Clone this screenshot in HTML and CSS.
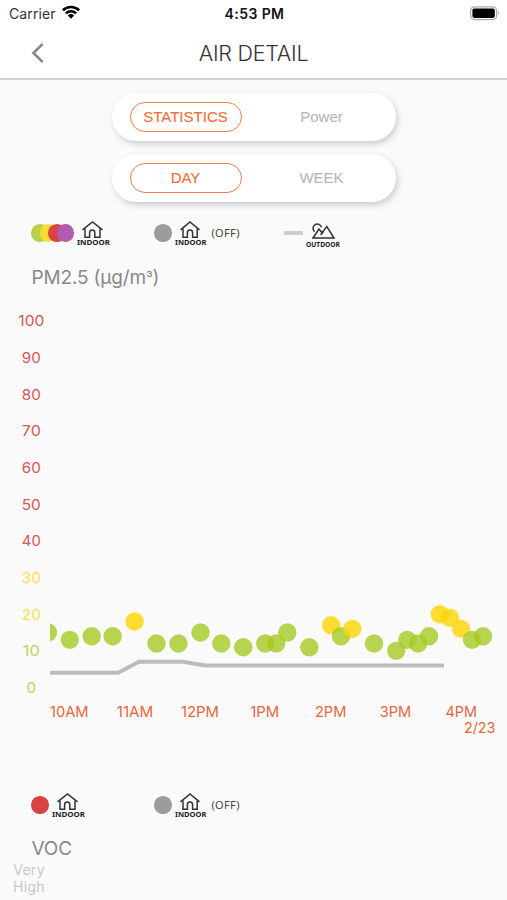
FILE: index.html
```html
<!DOCTYPE html>
<html lang="en">
<head>
<meta charset="UTF-8" />
<meta name="viewport" content="width=device-width, initial-scale=1" />
<title>Air Detail</title>
<link rel="stylesheet" href="styles.css">
</head>
<body>

<header>
  <div class="status-bar">
    <div class="carrier">
      <span>Carrier</span>
      <svg class="wifi" width="20" height="16" viewBox="0 0 20 16">
        <path d="M1.9 5.3 A11.6 11.6 0 0 1 18.1 5.3" />
        <path d="M4.9 8.4 A7.3 7.3 0 0 1 15.1 8.4" />
        <path class="tip" d="M6.9 10.4 A4.4 4.4 0 0 1 13.1 10.4 L10 13.7 Z" />
      </svg>
    </div>
    <div class="time">4:53 PM</div>
    <svg class="battery" width="32" height="16" viewBox="0 0 32 16">
      <rect class="case" x="1.6" y="0.8" width="26" height="12.8" rx="4" />
      <rect x="3.4" y="2.5" width="22.4" height="9.4" rx="1.8" />
      <path class="cap" d="M28.9 5 Q30.8 7.2 28.9 9.4 Z" />
    </svg>
  </div>
  <div class="nav-bar">
    <svg class="back" width="16" height="24" viewBox="0 0 16 24">
      <path d="M12.6 3 L3.4 12 L12.6 21" />
    </svg>
    <h1>AIR DETAIL</h1>
  </div>
</header>

<main>
  <div class="switch">
    <button class="active">STATISTICS</button>
    <button>Power</button>
  </div>
  <div class="switch">
    <button class="active">DAY</button>
    <button>WEEK</button>
  </div>

  <section class="pm">
    <div class="legend">
      <div class="item">
        <span class="dot green"></span>
        <span class="dot yellow"></span>
        <span class="dot red"></span>
        <span class="dot purple"></span>
        <svg class="icon" width="36" height="26" viewBox="0 0 36 26">
          <path d="M5.5 9.8 L15.5 2 L25.5 9.8" />
          <path d="M8 8.4 V17.2 H12.6 V12.7 A2.6 2.6 0 0 1 17.8 12.7 V17.2 H23 V8.4" />
          <text x="0" y="25" textLength="33" lengthAdjust="spacingAndGlyphs">INDOOR</text>
        </svg>
      </div>
      <div class="item">
        <span class="dot gray"></span>
        <svg class="icon" width="36" height="26" viewBox="0 0 36 26">
          <path d="M5.5 9.8 L15 2 L24.5 9.8" />
          <path d="M8 8.4 V17.2 H12.4 V12.7 A2.6 2.6 0 0 1 17.6 12.7 V17.2 H22.2 V8.4" />
          <text x="0" y="25" textLength="31.5" lengthAdjust="spacingAndGlyphs">INDOOR</text>
        </svg>
        <span class="off">(OFF)</span>
      </div>
      <div class="item">
        <span class="line"></span>
        <svg class="icon" width="36" height="26" viewBox="0 0 36 26">
          <path d="M8.5 11.6 A4.3 4.3 0 1 1 15.5 7.4" />
          <path d="M7 18 L13 9 L16 12.8 L20.8 6.6 L28 18 Z" />
          <path d="M14.6 15 L17.6 11.2" />
          <text x="0" y="27" textLength="34" lengthAdjust="spacingAndGlyphs">OUTDOOR</text>
        </svg>
      </div>
    </div>
    <h2>PM2.5 (μg/m<span class="cubed">³</span>)</h2>
    <svg class="chart" id="pmChart" width="507" height="450" viewBox="0 300 507 450">
      <defs>
        <clipPath id="plot"><rect x="50" y="300" width="457" height="400" /></clipPath>
      </defs>
      <polyline class="outdoor-line" points="50,672.8 118,672.8 139,661.8 183,661.8 205,665.5 444,665.5" />
    </svg>
  </section>

  <section class="voc">
    <div class="legend">
      <div class="item">
        <span class="dot red"></span>
        <svg class="icon" width="36" height="26" viewBox="0 0 36 26">
          <path d="M5.5 9.8 L15.5 2 L25.5 9.8" />
          <path d="M8 8.4 V17.2 H12.6 V12.7 A2.6 2.6 0 0 1 17.8 12.7 V17.2 H23 V8.4" />
          <text x="0" y="25" textLength="33" lengthAdjust="spacingAndGlyphs">INDOOR</text>
        </svg>
      </div>
      <div class="item">
        <span class="dot gray"></span>
        <svg class="icon" width="36" height="26" viewBox="0 0 36 26">
          <path d="M5.5 9.8 L15 2 L24.5 9.8" />
          <path d="M8 8.4 V17.2 H12.4 V12.7 A2.6 2.6 0 0 1 17.6 12.7 V17.2 H22.2 V8.4" />
          <text x="0" y="25" textLength="31.5" lengthAdjust="spacingAndGlyphs">INDOOR</text>
        </svg>
        <span class="off">(OFF)</span>
      </div>
    </div>
    <h2>VOC</h2>
    <div class="level">Very<br>High</div>
  </section>
</main>

<script src="script.js"></script>
</body>
</html>
```
FILE: styles.css
```css
* {
  box-sizing: border-box;
}
body {
  margin: 0;
  height: 900px;
  overflow: hidden;
  background: #fafafa;
  font-family: Inter, "Liberation Sans", sans-serif;
}

/* Header */
header {
  height: 80px;
  background: #fff;
  border-bottom: 2px solid #d2d2d2;
}
.status-bar {
  display: grid;
  grid-template-columns: 1fr auto 1fr;
  align-items: center;
  height: 27px;
  padding: 0 6px 0 9px;
  color: #111;
}
.carrier {
  display: flex;
  align-items: center;
  gap: 5px;
  font-size: 14px;
  letter-spacing: 0.1px;
  color: #333;
}
.wifi {
  margin-top: -2px;
  fill: none;
  stroke: #000;
  stroke-width: 2.6;
}
.wifi .tip {
  fill: #000;
  stroke: none;
}
.time {
  font-size: 14px;
  font-weight: 600;
  letter-spacing: 0.4px;
  margin-right: 1px;
}
.battery {
  justify-self: end;
}
.battery .case {
  fill: #fff;
  stroke: #aaa;
  stroke-width: 1.2;
}
.battery .cap {
  fill: #aaa;
}
.nav-bar {
  display: grid;
  grid-template-columns: 1fr auto 1fr;
  align-items: center;
  height: 51px;
  padding: 0 30px;
}
.back {
  fill: none;
  stroke: #888;
  stroke-width: 2.5;
}
h1 {
  margin: 1px 0 0;
  font-size: 21.5px;
  font-weight: 300;
  letter-spacing: -0.25px;
  color: #333;
}

/* Switches */
main {
  padding-top: 13px;
}
.switch {
  display: flex;
  align-items: center;
  gap: 24px;
  width: 284px;
  height: 48px;
  margin: 0 auto 13px;
  padding: 0 18px;
  border-radius: 24px;
  background: #fff;
  box-shadow: 2px 3px 6px rgba(0, 0, 0, 0.18);
}
.switch button {
  flex: none;
  width: 112px;
  height: 30px;
  padding: 0;
  border: none;
  background: none;
  font-family: "Liberation Sans", Arial, sans-serif;
  font-size: 15px;
  line-height: 26px;
  -webkit-text-stroke: 0.15px;
  color: #b8b8b8;
}
.switch button.active {
  border: 1.5px solid #ef7d48;
  border-radius: 15px;
  color: #f0703a;
}

/* Legend */
.legend {
  display: grid;
  grid-template-columns: 123px 130px 1fr;
  height: 26px;
  padding-left: 31px;
}
.item {
  display: flex;
  align-items: center;
}
.dot {
  width: 17.5px;
  height: 17.5px;
  border-radius: 50%;
}
.dot + .dot {
  margin-left: -9px;
}
.green { background: #b4d34b; }
.yellow { background: #fddb33; }
.red { background: #d84343; }
.purple { background: #b25ab0; }
.gray { background: #9c9c9c; }
.icon {
  margin-left: 3px;
  overflow: visible;
  fill: none;
  stroke: #333;
  stroke-width: 1.5;
}
.icon text {
  fill: #222;
  stroke: none;
  font: 700 7px "Noto Sans", sans-serif;
}
.off {
  margin-left: 1px;
  margin-top: -1px;
  font: 11px "Noto Sans", sans-serif;
  letter-spacing: 0.3px;
  color: #444;
}
.line {
  width: 19px;
  height: 4px;
  background: #ccc;
}
h2 {
  height: 24px;
  margin: 0 0 0 31.5px;
  font-size: 19px;
  font-weight: 400;
  line-height: 24px;
  letter-spacing: -0.15px;
  color: #888;
}
.cubed {
  font-size: 15px;
  line-height: 1;
}

/* PM2.5 */
.pm {
  padding-top: 5px;
}
.pm h2 {
  margin-top: 20px;
}
.chart {
  display: block;
  margin-top: 10px;
}
.chart text {
  font-size: 14.2px;
  text-anchor: middle;
}
.chart .high { fill: #dc5555; }
.chart .mid { fill: #fbdf55; }
.chart .low { fill: #b9d75f; }
.chart .hour { fill: #e9663d; }
.outdoor-line {
  fill: none;
  stroke: #bcbcbc;
  stroke-width: 4;
}
.good {
  fill: #a5cb22;
  fill-opacity: 0.8;
}
.fair {
  fill: #ffd500;
  fill-opacity: 0.8;
}

/* VOC */
.voc {
  padding-top: 42px;
}
.voc h2 {
  margin-top: 19px;
}
.level {
  width: 58px;
  font-size: 14px;
  line-height: 17px;
  letter-spacing: 0.3px;
  text-align: center;
  color: #c8c8c8;
}
```
FILE: script.js
```js
const SVG_NS = 'http://www.w3.org/2000/svg';
const chart = document.getElementById('pmChart');

// y position of a PM2.5 value
function yOf(value) {
  return 687.5 - value * 3.665;
}

function addText(x, y, text, cls, width) {
  const el = document.createElementNS(SVG_NS, 'text');
  el.setAttribute('x', x);
  el.setAttribute('y', y);
  el.setAttribute('class', cls);
  el.setAttribute('textLength', width);
  el.setAttribute('lengthAdjust', 'spacingAndGlyphs');
  el.textContent = text;
  chart.appendChild(el);
}

// y axis
for (let v = 0; v <= 100; v += 10) {
  const cls = v >= 40 ? 'high' : v >= 20 ? 'mid' : 'low';
  const width = v === 100 ? 26 : v === 0 ? 9.5 : v === 10 ? 17 : 19;
  addText(31.3, yOf(v) + 5.3, v, cls, width);
}

// x axis
const hours = [
  [69.3, '10AM', 38.5], [135, '11AM', 36.5], [200, '12PM', 38], [264.7, '1PM', 29],
  [330.7, '2PM', 31.5], [395.5, '3PM', 31.5], [461.3, '4PM', 31.5]
];
hours.forEach(([x, label, width]) => addText(x, 717.2, label, 'hour', width));
addText(479.7, 733, '2/23', 'hour', 31.5);

// indoor readings: [x, PM2.5]
const readings = [
  [48, 15], [69.8, 13], [91.7, 14], [112.7, 14], [134.6, 18], [156.5, 12],
  [178.5, 12], [200.5, 15], [221.3, 12], [243.3, 11], [265.2, 12], [276.2, 12],
  [287.3, 15], [309.3, 11], [331.2, 17], [341, 14], [352.3, 16], [374, 12],
  [396.2, 10], [407.2, 13], [418, 12], [429, 14], [439.8, 20], [450, 19],
  [461, 16], [472, 13], [483, 14]
];
const group = document.createElementNS(SVG_NS, 'g');
group.setAttribute('clip-path', 'url(#plot)');
readings.forEach(([x, value]) => {
  const dot = document.createElementNS(SVG_NS, 'circle');
  dot.setAttribute('cx', x);
  dot.setAttribute('cy', yOf(value));
  dot.setAttribute('r', 9.2);
  dot.setAttribute('class', value > 15 ? 'fair' : 'good');
  group.appendChild(dot);
});
chart.appendChild(group);
```
